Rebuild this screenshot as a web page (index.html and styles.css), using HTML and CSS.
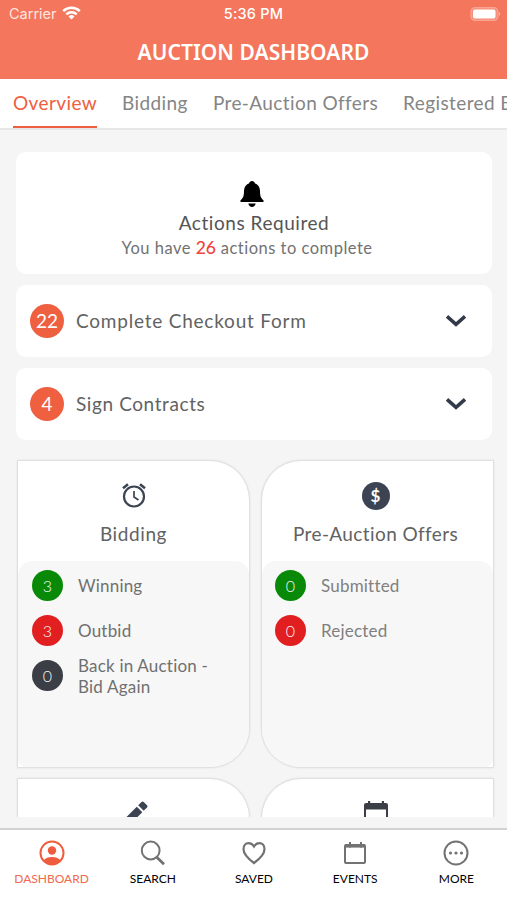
FILE: index.html
```html
<!DOCTYPE html>
<html lang="en">
<head>
<meta charset="utf-8">
<title>Auction Dashboard</title>
<link rel="stylesheet" href="styles.css">
</head>
<body>
<header class="header">
  <div class="status">
    <div class="carrier"><span>Carrier</span>
      <svg width="19" height="14" viewBox="0 0 19 14"><g fill="none" stroke="#fff" stroke-width="2.5"><path d="M1.2 5.1a11.8 11.8 0 0 1 16.6 0"/><path d="M4.3 8.4a7.4 7.4 0 0 1 10.4 0"/></g><path fill="#fff" d="M6.5 10.5a4.3 4.3 0 0 1 6 0l-3 3z"/></svg>
    </div>
    <div class="time">5:36 PM</div>
    <div class="battery"><svg width="31" height="14" viewBox="0 0 31 14"><rect x="1" y=".6" width="26.8" height="12.8" rx="4" fill="#f58f7a" stroke="#f8a594" stroke-width="1.2"/><rect x="3" y="2.5" width="22.500" height="9" rx="2" fill="#fff"/><path d="M28.900 4.8q2.6 2.2 0 4.4z" fill="#fab5a5"/></svg></div>
  </div>
  <h1 class="title">AUCTION DASHBOARD</h1>
</header>
<nav class="tabs">
  <a class="tab tab-active">Overview</a><a class="tab">Bidding</a><a class="tab">Pre-Auction Offers</a><a class="tab">Registered Bidders</a>
</nav>
<main class="content">
  <section class="card summary">
    <svg width="24" height="26" viewBox="0 0 24 26"><path d="M12 0c1.500 0 2.600 1 2.800 2.200 3.500 1.100 5.200 4.100 5.200 7.800 0 4.600.7 6.900 3.200 9 .9.8.4 2-.7 2h-21C.4 21-.1 19.800.8 19 3.300 16.900 4 14.600 4 10c0-3.700 1.700-6.700 5.200-7.800C9.400 1 10.500 0 12 0z"/><path d="M8.300 22.500h7.400c-.5 2.200-1.900 3.500-3.700 3.500s-3.200-1.300-3.700-3.500z"/></svg>
    <h2 class="summary-title">Actions Required</h2>
    <p class="summary-text">You have <b>26</b> actions to complete</p>
  </section>
  <section class="card row">
    <span class="count">22</span><span class="row-label label-checkout">Complete Checkout Form</span>
    <svg class="chevron" width="22" height="14" viewBox="0 0 22 14"><path d="M2 2.400l9 8 9-8"/></svg>
  </section>
  <section class="card row">
    <span class="count">4</span><span class="row-label">Sign Contracts</span>
    <svg class="chevron" width="22" height="14" viewBox="0 0 22 14"><path d="M2 2.400l9 8 9-8"/></svg>
  </section>
  <div class="tiles">
    <article class="tile left">
      <div class="tile-head">
        <svg width="26" height="28" viewBox="0 0 26 28"><g fill="none" stroke="#3c4453"><circle cx="13" cy="14.500" r="10" stroke-width="2.200"/><path d="M2 6.300l5-4M24 6.300l-5-4" stroke-width="2.600"/><path d="M13 9v6l4.500 3" stroke-width="1.700"/></g></svg>
        <h3>Bidding</h3>
      </div>
      <div class="tile-body">
        <div class="stat"><i class="dot green">3</i><span>Winning</span></div>
        <div class="stat"><i class="dot red">3</i><span>Outbid</span></div>
        <div class="stat"><i class="dot dark">0</i><span>Back in Auction -<br>Bid Again</span></div>
      </div>
    </article>
    <article class="tile right">
      <div class="tile-head">
        <span class="dollar">$</span>
        <h3 class="offers">Pre-Auction Offers</h3>
      </div>
      <div class="tile-body muted">
        <div class="stat"><i class="dot green">0</i><span>Submitted</span></div>
        <div class="stat"><i class="dot red">0</i><span>Rejected</span></div>
      </div>
    </article>
    <article class="tile left">
      <div class="tile-head pencil">
        <svg width="28" height="28" viewBox="0 0 28 28"><path fill="#3c4453" d="M1 21.500L15.800 6.700l5.500 5.500L6.500 27H1zM17.200 5.300l3.300-3.300q1.100-1 2.200 0l3.300 3.300q1 1.100 0 2.200l-3.300 3.300z"/></svg>
      </div>
    </article>
    <article class="tile right">
      <div class="tile-head calendar">
        <svg width="24" height="26" viewBox="0 0 24 26"><path fill="#3b3e44" d="M4 0h2.200v2h11.600V0H20v2h2q2 0 2 2v20q0 2-2 2H2q-2 0-2-2V4q0-2 2-2h2zM2 8.500V24h20V8.500z"/></svg>
      </div>
    </article>
  </div>
</main>
<nav class="bottom">
  <a class="item active"><svg width="26" height="26" viewBox="0 0 26 26"><circle cx="13" cy="13" r="11.500" fill="none" stroke="#ee5d3d" stroke-width="2"/><circle cx="13" cy="10.500" r="4.200" fill="#ee5d3d"/><path fill="#ee5d3d" d="M4.300 20.500q3.200-3.400 8.700-3.400t8.700 3.400Q18 25 13 25t-8.700-4.500z"/></svg><span>DASHBOARD</span></a>
  <a class="item"><svg width="26" height="26" viewBox="0 0 26 26"><g fill="none" stroke="#727272"><circle cx="10.700" cy="10.500" r="8.900" stroke-width="2"/><path d="M16.800 17.200l7.200 7" stroke-width="2.800"/></g></svg><span>SEARCH</span></a>
  <a class="item"><svg width="26" height="26" viewBox="0 0 26 26"><path fill="none" stroke="#727272" stroke-width="2.200" d="M13 23C9 20 2.500 15.100 2.500 9.200c0-3.700 2.100-6 5-6 2.500 0 4.400 1.400 5.500 3.300 1.100-1.900 3-3.300 5.500-3.300 2.900 0 5 2.300 5 6C23.500 15.100 17 20 13 23z"/></svg><span>SAVED</span></a>
  <a class="item"><svg width="26" height="26" viewBox="0 0 26 26"><g fill="none" stroke="#727272" stroke-width="2"><rect x="3" y="5" width="20" height="18" rx="1"/><path d="M8 2v5.500M19 2v5.500"/><path d="M3 6h20" stroke-width="3.200"/></g></svg><span>EVENTS</span></a>
  <a class="item"><svg width="26" height="26" viewBox="0 0 26 26"><circle cx="13" cy="13" r="11.500" fill="none" stroke="#727272" stroke-width="2"/><g fill="#727272"><circle cx="7.500" cy="13" r="1.600"/><circle cx="13" cy="13" r="1.600"/><circle cx="18.500" cy="13" r="1.600"/></g></svg><span>MORE</span></a>
</nav>
</body>
</html>
```

FILE: styles.css
```css
* { box-sizing: border-box; }
body {
  margin: 0;
  width: 507px;
  height: 900px;
  overflow: hidden;
  display: flex;
  flex-direction: column;
  background: #f5f5f5;
  font-family: Lato, "Liberation Sans", sans-serif;
  color: #626262;
}
h1, h2, h3, p { margin: 0; font-weight: 400; }
svg { display: block; flex: none; }
.header { height: 79px; flex: none; background: #f3765d; color: #fff; }
.status {
  display: grid;
  grid-template-columns: 1fr auto 1fr;
  align-items: center;
  height: 27px;
  padding: 0 6px 0 9px;
  font: 14.500px/27px Inter, sans-serif;
}
.carrier { display: flex; align-items: center; gap: 5px; color: #ffe6df; }
.carrier svg { margin-top: -1px; }
.time { font-weight: 500; margin-left: -3px; letter-spacing: .2px; }
.battery { display: flex; justify-content: flex-end; }
.title {
  font: 600 21px/50px "Noto Sans", sans-serif;
  letter-spacing: .05px;
  text-align: center;
}
.tabs {
  height: 51px;
  flex: none;
  display: flex;
  gap: 25px;
  padding-left: 13px;
  background: #fff;
  border-bottom: 2px solid #e6e7e9;
  overflow: hidden;
}
.tab {
  height: 50px;
  flex: none;
  font-size: 19px;
  line-height: 48px;
  letter-spacing: .4px;
  white-space: nowrap;
  color: #858585;
}
.tab-active { color: #ee6041; border-bottom: 3px solid #ee6041; }
.content { height: 687px; flex: none; padding: 22px 13px 0 16px; overflow: hidden; }
.card { width: 476px; background: #fff; border-radius: 10px; margin-bottom: 11px; }
.summary {
  height: 122px;
  padding-top: 29px;
  display: flex;
  flex-direction: column;
  align-items: center;
}
.summary svg { margin: 0 5px 3px 0; }
.summary-title { font-size: 19px; line-height: 25px; letter-spacing: .55px; color: #555; }
.summary-text { margin-right: 14px; font-size: 16.500px; line-height: 26px; letter-spacing: .5px; color: #727272; }
.summary-text b { font-weight: 500; font-size: 17.500px; letter-spacing: 0; color: #f2423b; }
.row { height: 72px; display: flex; align-items: center; padding: 0 25px 0 14px; }
.count {
  width: 34px;
  height: 34px;
  border-radius: 50%;
  background: #ee6040;
  color: #fff;
  font-size: 19px;
  line-height: 34px;
  text-align: center;
}
.row-label { margin-left: 12px; padding-bottom: 2px; flex: 1; font-size: 19px; letter-spacing: .6px; }
.label-checkout { letter-spacing: .78px; }
.chevron { fill: none; stroke: #323a49; stroke-width: 3.500; }
.tiles {
  margin-top: 20px;
  padding-left: 1px;
  display: grid;
  grid-template-columns: 233px 233px;
  grid-auto-rows: 308px;
  gap: 10px 11px;
}
.tile { background: #fff; border: 1px solid #e0e0e0; box-shadow: 0 0 2px #dedede; overflow: hidden; }
.left { border-radius: 0 40px 40px 0; }
.right { border-radius: 40px 0 0 40px; }
.tile-head {
  height: 100px;
  padding-top: 21px;
  display: flex;
  flex-direction: column;
  align-items: center;
}
.tile-head h3 { margin-top: 11px; font-size: 19px; line-height: 26px; letter-spacing: .6px; }
.right .tile-head { padding-right: 4px; }
.tile-head .offers { letter-spacing: .4px; }
.left .pencil { padding-left: 3px; }
.right .calendar { padding-top: 22px; }
.dollar {
  width: 28px;
  height: 28px;
  border-radius: 50%;
  background: #3c4453;
  color: #fff;
  font: 700 17px/28px Lato, sans-serif;
  text-align: center;
}
.tile-body {
  height: 206px;
  padding: 9px 14px;
  border-radius: 14px 14px 8px 8px;
  background: #f7f7f7;
}
.right .tile-body { padding-left: 13px; }
.stat { height: 31px; margin-bottom: 14px; display: flex; align-items: center; font-size: 17px; line-height: 21px; letter-spacing: .2px; color: #707070; }
.muted .stat { color: #808080; }
.dot {
  width: 31px;
  height: 31px;
  margin-right: 15px;
  flex: none;
  border-radius: 50%;
  color: #f5f5f5;
  font-size: 16px;
  font-weight: 300;
  font-style: normal;
  line-height: 31px;
  text-align: center;
}
.green { background: #088a08; }
.red { background: #e21f20; }
.dark { background: #3b3e44; }
.bottom {
  height: 72px;
  margin-top: 11px;
  padding-left: 1px;
  flex: none;
  display: grid;
  grid-template-columns: repeat(5, 1fr);
  background: #fff;
  border-top: 2px solid #d2d2d2;
}
.item {
  display: flex;
  flex-direction: column;
  align-items: center;
  padding-top: 10px;
  font-size: 12px;
  line-height: 18px;
  color: #000;
}
.item span { margin-top: 4px; }
.active { color: #f06a4d; }
```
